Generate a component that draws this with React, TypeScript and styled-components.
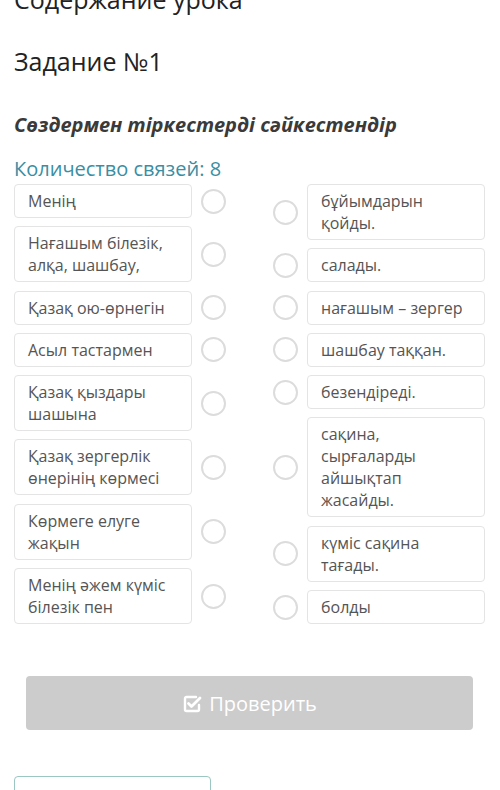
import styled, { createGlobalStyle } from "styled-components"

const GlobalStyle = createGlobalStyle`
  html, body {
    margin: 0;
    padding: 0;
    background: #ffffff;
  }
  body {
    font-family: "Open Sans", "Noto Sans", sans-serif;
    overflow: hidden;
  }
`

const Page = styled.div`
  width: 500px;
  height: 790px;
  overflow: hidden;
  padding: 0 14px;
  box-sizing: border-box;
  background: #fff;
`

const LessonTitle = styled.h1`
  margin: -15px 0 0;
  font-size: 25px;
  line-height: 28px;
  font-weight: 400;
  color: #222;
`

const TaskTitle = styled.h2`
  margin: 31px 0 0;
  font-size: 25px;
  line-height: 34px;
  font-weight: 400;
  color: #222;
`

const Instruction = styled.h3`
  margin: 34px 0 0;
  font-size: 20px;
  line-height: 26px;
  font-weight: 700;
  font-style: italic;
  color: #3a3a3a;
`

const Counter = styled.div`
  margin-top: 18px;
  font-size: 20px;
  line-height: 26px;
  color: #3a8ea3;
`

const Board = styled.div`
  display: flex;
  justify-content: space-between;
  margin-top: 2px;
  width: 471px;
`

const Column = styled.div`
  display: flex;
  flex-direction: column;
  gap: 8.3px;
`

const Row = styled.div<{ $side: "left" | "right" }>`
  display: flex;
  align-items: center;
  gap: 9px;
  flex-direction: ${(p) => (p.$side === "left" ? "row" : "row-reverse")};
`

const Card = styled.div`
  width: 178px;
  box-sizing: border-box;
  padding: 5px 12px 5px 13px;
  border: 1px solid #e4e4e4;
  border-radius: 4px;
  background: #fff;
  font-size: 16px;
  line-height: 22px;
  color: #555;
`

const Dot = styled.span`
  width: 25px;
  height: 25px;
  box-sizing: border-box;
  border: 2px solid #dcdcdc;
  border-radius: 50%;
  background: #fff;
  flex-shrink: 0;
`

const CheckButton = styled.button`
  display: flex;
  align-items: center;
  justify-content: center;
  gap: 7px;
  width: 447px;
  height: 54px;
  margin: 52px 0 0 12px;
  border: none;
  border-radius: 4px;
  background: #cccccc;
  color: #fff;
  font-family: "Open Sans", "Noto Sans", sans-serif;
  font-size: 20px;
  cursor: default;
`

const NextButton = styled.div`
  width: 197px;
  height: 40px;
  margin-top: 46px;
  box-sizing: border-box;
  border: 1px solid #9ac7c1;
  border-radius: 4px;
  background: #fff;
`

function CheckIcon() {
  return (
    <svg width="20" height="19" viewBox="0 0 20 19" fill="none">
      <path
        d="M14 3H4.5C3.7 3 3 3.7 3 4.5v11c0 .8.7 1.5 1.5 1.5h11c.8 0 1.5-.7 1.5-1.5V11"
        stroke="#fff"
        strokeWidth="2.4"
        strokeLinecap="round"
      />
      <path
        d="M6.5 9.5l3 3L18 4"
        stroke="#fff"
        strokeWidth="2.8"
        strokeLinecap="round"
        strokeLinejoin="round"
      />
    </svg>
  )
}

const leftItems = [
  "Менің",
  "Нағашым білезік, алқа, шашбау,",
  "Қазақ ою-өрнегін",
  "Асыл тастармен",
  "Қазақ қыздары шашына",
  "Қазақ зергерлік өнерінің көрмесі",
  "Көрмеге елуге жақын",
  "Менің әжем күміс білезік пен",
]

const rightItems = [
  "бұйымдарын қойды.",
  "салады.",
  "нағашым – зергер",
  "шашбау таққан.",
  "безендіреді.",
  "сақина, сырғаларды айшықтап жасайды.",
  "күміс сақина тағады.",
  "болды",
]

export default function App() {
  return (
    <Page>
      <GlobalStyle />
      <LessonTitle>Содержание урока</LessonTitle>
      <TaskTitle>Задание №1</TaskTitle>
      <Instruction>Сөздермен тіркестерді сәйкестендір</Instruction>
      <Counter>Количество связей: 8</Counter>
      <Board>
        <Column>
          {leftItems.map((text) => (
            <Row $side="left" key={text}>
              <Card>{text}</Card>
              <Dot />
            </Row>
          ))}
        </Column>
        <Column>
          {rightItems.map((text) => (
            <Row $side="right" key={text}>
              <Card>{text}</Card>
              <Dot />
            </Row>
          ))}
        </Column>
      </Board>
      <CheckButton>
        <CheckIcon />
        Проверить
      </CheckButton>
      <NextButton />
    </Page>
  )
}
